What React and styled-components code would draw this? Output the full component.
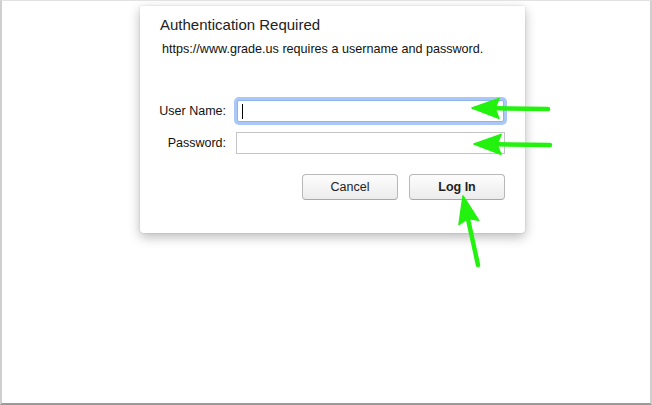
import React from 'react';
import styled, { createGlobalStyle } from 'styled-components';

const GlobalStyle = createGlobalStyle`
  html, body { margin: 0; padding: 0; background: #ffffff; }
  body { font-family: "Liberation Sans", Arial, sans-serif; }
`;

const Frame = styled.div`
  position: relative;
  width: 652px;
  height: 405px;
  box-sizing: border-box;
  border-top: 1px solid #e2e2e2;
  border-left: 2px solid #cfcfcf;
  border-right: 2px solid #cfcfcf;
  border-bottom: 2px solid #9a9a9a;
  background: #fff;
  overflow: hidden;
`;

const Sheet = styled.div`
  margin: 5px 0 0 138px;
  width: 385px;
  height: 227px;
  box-sizing: border-box;
  background: #fff;
  padding: 9px 16px 0 20px;
  border-radius: 0 0 3px 3px;
  box-shadow: 0 4px 12px rgba(0, 0, 0, 0.28), 0 0 1px rgba(0, 0, 0, 0.35);
  color: #1a1a1a;
`;

const Title = styled.div`
  font-size: 15px;
  line-height: 20px;
  color: #222;
`;

const Subtitle = styled.div`
  margin: 6px 0 0 2px;
  font-size: 12.6px;
  line-height: 16px;
  color: #111;
`;

const FormGrid = styled.div`
  display: grid;
  grid-template-columns: 68px 269px;
  column-gap: 10px;
  row-gap: 10px;
  align-items: center;
  margin: 43px 0 0 -2px;
`;

const Label = styled.label`
  justify-self: end;
  white-space: nowrap;
  font-size: 12.5px;
  color: #111;
`;

const Field = styled.div`
  height: 20px;
  box-sizing: content-box;
  border: 1px solid ${p => (p.focused ? '#8fb2e8' : '#c4c4c4')};
  box-shadow: ${p => (p.focused ? '0 0 0 3px #a9c8f7' : 'none')};
  border-radius: ${p => (p.focused ? '2px' : '0')};
  margin: ${p => (p.focused ? '0 1px' : '0')};
  display: flex;
  align-items: center;
  padding-left: 4px;
  background: #fff;
`;

const Caret = styled.span`
  width: 1px;
  height: 15px;
  background: #000;
`;

const Buttons = styled.div`
  display: flex;
  justify-content: flex-end;
  gap: 11px;
  margin-top: 20px;
  padding-right: 4px;
`;

const Button = styled.button`
  width: 96px;
  height: 26px;
  box-sizing: border-box;
  border: 1px solid #b8b8b8;
  border-bottom-color: #a8a8a8;
  border-radius: 4px;
  background: linear-gradient(#fdfdfd, #ececec);
  font-family: "Liberation Sans", Arial, sans-serif;
  font-size: 12.5px;
  font-weight: ${p => (p.primary ? 700 : 400)};
  color: #222;
  padding: 0;
`;

const Arrows = styled.svg`
  position: absolute;
  left: 0;
  top: 0;
  pointer-events: none;
`;

const GREEN = '#22f20e';

function Arrow({ x1, y1, x2, y2 }) {
  // tail at x1,y1; tip at x2,y2
  const dx = x2 - x1;
  const dy = y2 - y1;
  const len = Math.hypot(dx, dy);
  const ux = dx / len;
  const uy = dy / len;
  const headLen = 27;
  const headW = 10;
  const bx = x2 - ux * headLen;
  const by = y2 - uy * headLen;
  const px = -uy;
  const py = ux;
  const pts = `${x2},${y2} ${bx + px * headW},${by + py * headW} ${bx + ux * 4},${by + uy * 4} ${bx - px * headW},${by - py * headW}`;
  return (
    <g>
      <line x1={x1} y1={y1} x2={bx + ux * 4} y2={by + uy * 4} stroke={GREEN} strokeWidth="4.5" strokeLinecap="round" />
      <polygon points={pts} fill={GREEN} stroke={GREEN} strokeWidth="1.5" strokeLinejoin="round" />
    </g>
  );
}

export default function App() {
  return (
    <>
      <GlobalStyle />
      <Frame>
        <Sheet>
          <Title>Authentication Required</Title>
          <Subtitle>https://www.grade.us requires a username and password.</Subtitle>
          <FormGrid>
            <Label>User Name:</Label>
            <Field focused>
              <Caret />
            </Field>
            <Label>Password:</Label>
            <Field />
          </FormGrid>
          <Buttons>
            <Button>Cancel</Button>
            <Button primary>Log In</Button>
          </Buttons>
        </Sheet>
        <Arrows width="652" height="405" viewBox="0 0 652 405">
          <Arrow x1={546} y1={108} x2={470} y2={107} />
          <Arrow x1={548} y1={144} x2={472} y2={143} />
          <Arrow x1={476} y1={264} x2={461} y2={195} />
        </Arrows>
      </Frame>
    </>
  );
}
